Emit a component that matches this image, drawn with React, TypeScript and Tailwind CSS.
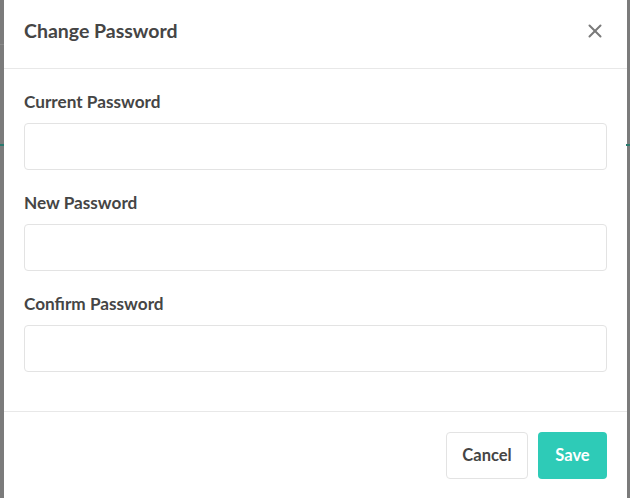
import { X } from "lucide-react";

const fields = ["Current Password", "New Password", "Confirm Password"];

export default function App() {
    return (
        <div className="relative h-[498px] w-[630px] overflow-hidden bg-[#7b7b7b] font-['Lato',sans-serif]">
            {/* bits of the page behind the overlay */}
            <div className="absolute left-0 top-[44px] h-px w-[4px] bg-[#8a8a8a]" />
            <div className="absolute left-[626px] top-[144px] h-[2px] w-[4px] bg-[#2a7a6e]" />
            <div className="absolute left-0 top-[144px] h-[2px] w-[4px] bg-[#2a7a6e]" />

            <div className="ml-[4px] flex h-full w-[623px] flex-col bg-white">
                {/* Header */}
                <div className="flex h-[69px] shrink-0 items-start justify-between border-b border-[#e8e8e8] px-5 pt-[19px]">
                    <h2 className="text-[19.5px] font-bold leading-6 text-[#454545]">Change Password</h2>
                    <button className="mt-[1px] mr-[1px] text-[#7a7a7a]">
                        <X className="h-[22px] w-[22px]" strokeWidth={2.2} />
                    </button>
                </div>

                {/* Body */}
                <div className="flex flex-col gap-[21px] border-b border-[#e8e8e8] px-5 pt-[21px] pb-[39px]">
                    {fields.map((label) => (
                        <div key={label} className="flex flex-col gap-[9px]">
                            <label className="text-[17.2px] font-bold leading-6 text-[#454545]">{label}</label>
                            <input
                                type="password"
                                className="h-[47px] w-full rounded-[4px] border border-[#e3e3e3] px-3 outline-none"
                            />
                        </div>
                    ))}
                </div>

                {/* Footer */}
                <div className="flex justify-end gap-[10px] px-5 pt-[20px]">
                    <button className="h-[47px] w-[82px] rounded-[4px] border border-[#e3e3e3] bg-white text-[16.5px] font-bold text-[#454545]">
                        Cancel
                    </button>
                    <button className="h-[47px] w-[69px] rounded-[4px] bg-[#2ecbb7] text-[16.5px] font-bold text-white">
                        Save
                    </button>
                </div>
            </div>
        </div>
    );
}
